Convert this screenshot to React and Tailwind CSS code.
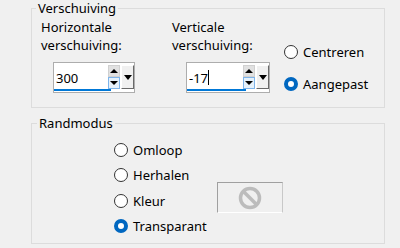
import React from "react";

const font = { fontFamily: '"Noto Sans", "Open Sans", sans-serif' };

function Radio({ checked, label }) {
  return (
    <div className="flex items-center h-full">
      {checked ? (
        <span className="w-[14px] h-[14px] rounded-full border-[4px] border-[#0067c0] bg-white shrink-0" />
      ) : (
        <span className="w-[14px] h-[14px] rounded-full border border-[#333333] bg-white shrink-0" />
      )}
      <span className="ml-[5px] text-[13px] leading-[18px] text-black">{label}</span>
    </div>
  );
}

function Spinner({ value, width, caret }) {
  return (
    <div className={`flex h-[31px] bg-white border border-[#adadad] ${width}`}>
      <div className="relative flex-1 flex items-center pl-[2px]">
        <span className="text-[13px] leading-[18px] text-black">{value}</span>
        {caret && <span className="w-px h-[15px] bg-black" />}
        {/* blue focus line */}
        <span className="absolute left-0 right-[-3px] bottom-[1px] h-[2px] bg-[#0078d7]" />
      </div>
      <div className="flex flex-col mt-[2px] mb-[3px] w-[12px]">
        <div className="h-[12px] bg-[#e1e1e1] border border-[#d0d0d0] flex items-center justify-center">
          <span className="w-0 h-0 border-l-[4px] border-r-[4px] border-b-[4px] border-l-transparent border-r-transparent border-b-black" />
        </div>
        <div className="h-[12px] bg-[#e5f1fb] border border-[#7eb4ea] flex items-center justify-center">
          <span className="w-0 h-0 border-l-[4px] border-r-[4px] border-t-[4px] border-l-transparent border-r-transparent border-t-black" />
        </div>
      </div>
      <div className="ml-px mt-[2px] mb-[3px] w-[13px] bg-[#f0f0f0] border-r border-b border-[#696969] border-t border-l border-t-white border-l-white flex items-center justify-center">
        <span className="w-0 h-0 border-l-[4px] border-r-[4px] border-t-[5px] border-l-transparent border-r-transparent border-t-black" />
      </div>
    </div>
  );
}

export default function App() {
  return (
    <div className="w-[400px] h-[248px] bg-[#f0f0f0] overflow-hidden pl-[31px] pr-[15px]" style={font}>
      {/* Verschuiving */}
      <fieldset className="border border-[#dcdcdc] h-[108px]">
        <legend className="ml-[4px] px-[2px] text-[13px] leading-[16px] text-black">Verschuiving</legend>
        <div className="flex pt-[2px] pl-[9px]">
          <div className="w-[131px]">
            <div className="text-[13px] leading-[18px] text-black">
              Horizontale
              <br />
              verschuiving:
            </div>
            <div className="ml-[12px] mt-[8px]">
              <Spinner value="300" width="w-[82px]" />
            </div>
          </div>
          <div className="w-[112px]">
            <div className="text-[13px] leading-[18px] text-black">
              Verticale
              <br />
              verschuiving:
            </div>
            <div className="ml-[14px] mt-[8px]">
              <Spinner value="-17" width="w-[84px]" caret />
            </div>
          </div>
          <div className="flex flex-col pt-[22px]">
            <div className="h-[24px]">
              <Radio label="Centreren" />
            </div>
            <div className="h-[24px] mt-[8px]">
              <Radio checked label="Aangepast" />
            </div>
          </div>
        </div>
      </fieldset>

      {/* Randmodus */}
      <fieldset className="border border-[#dcdcdc] mt-[7px] h-[129px]">
        <legend className="ml-[5px] px-[2px] text-[13px] leading-[16px] text-black">Randmodus</legend>
        <div className="flex pt-[6px] pl-[82px]">
          <div className="flex flex-col w-[103px]">
            <div className="h-[25.5px]">
              <Radio label="Omloop" />
            </div>
            <div className="h-[25.5px]">
              <Radio label="Herhalen" />
            </div>
            <div className="h-[25.5px]">
              <Radio label="Kleur" />
            </div>
            <div className="h-[25.5px]">
              <Radio checked label="Transparant" />
            </div>
          </div>
          <div className="mt-[45px] w-[66px] h-[31px] border border-t-[#a0a0a0] border-l-[#a0a0a0] border-r-[#c8c8c8] border-b-white flex items-center justify-center">
            <svg width="24" height="24" viewBox="0 0 24 24">
              <circle cx="12" cy="12" r="9.5" fill="none" stroke="#bcbcbc" strokeWidth="3.5" />
              <line x1="5.5" y1="5.5" x2="18.5" y2="18.5" stroke="#bcbcbc" strokeWidth="3.5" />
            </svg>
          </div>
        </div>
      </fieldset>
    </div>
  );
}
